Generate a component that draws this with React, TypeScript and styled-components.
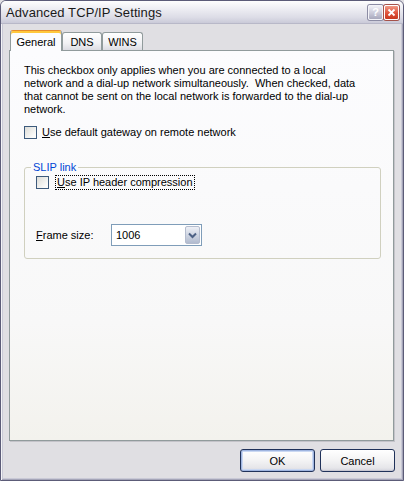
import React from "react";
import styled, { createGlobalStyle } from "styled-components";

const Global = createGlobalStyle`
  html, body { margin: 0; padding: 0; background: #e0dfe3; }
  body { font-family: "Liberation Sans", Arial, sans-serif; font-size: 11px; color: #000; }
`;

const Window = styled.div`
  width: 404px;
  height: 481px;
  box-sizing: border-box;
  background: #e0dfe3;
  border: 1px solid #5c5c78;
  border-radius: 6px 6px 0 0;
  box-shadow: inset 1px 0 0 #f4f4f7, inset -1px 0 0 #a5a5b8, inset 0 -1px 0 #a5a5b8,
    inset 2px 0 0 #c9c9d6, inset -2px 0 0 #c9c9d6, inset 0 -2px 0 #c9c9d6;
  display: flex;
  flex-direction: column;
  overflow: hidden;
`;

const TitleBar = styled.div`
  height: 22px;
  flex: none;
  display: flex;
  align-items: center;
  padding: 0 4px 0 5px;
  background: linear-gradient(#fefefe 0%, #eeeef3 35%, #dcdce6 75%, #cacad8 100%);
  border-bottom: 1px solid #b8b8c8;
`;

const Title = styled.div`
  flex: 1;
  font-size: 13px;
  color: #1a1a1a;
  letter-spacing: 0.1px;
`;

const CaptionButton = styled.div<{ $close?: boolean }>`
  width: 13px;
  height: 13px;
  margin-left: 1px;
  border-radius: 2px;
  border: 1px solid ${({ $close }) => ($close ? "#fff" : "#f4f4f8")};
  box-shadow: 0 0 0 1px ${({ $close }) => ($close ? "#a5524a" : "#8c8ca4")};
  background: ${({ $close }) =>
    $close
      ? "linear-gradient(#f09a86, #e0533b 55%, #c8381f)"
      : "linear-gradient(#f0f0f6, #c6c6d6 60%, #a8a8bc)"};
  display: flex;
  align-items: center;
  justify-content: center;
  color: #fff;
  font-weight: bold;
  font-size: 11px;
  line-height: 1;
`;

const Body = styled.div`
  flex: 1;
  display: flex;
  flex-direction: column;
  padding: 6px 0 0 8px;
`;

const TabStrip = styled.div`
  display: flex;
  align-items: flex-end;
  height: 20px;
  padding-left: 1px;
  position: relative;
  z-index: 1;
`;

const Tab = styled.div<{ $active?: boolean; $w: number }>`
  width: ${({ $w }) => $w}px;
  box-sizing: border-box;
  height: ${({ $active }) => ($active ? 21 : 18)}px;
  margin-bottom: ${({ $active }) => ($active ? -1 : 0)}px;
  border: 1px solid #919b9c;
  border-bottom: none;
  border-radius: 3px 3px 0 0;
  display: flex;
  align-items: center;
  justify-content: center;
  padding-top: ${({ $active }) => ($active ? 1 : 0)}px;
  background: ${({ $active }) =>
    $active ? "#fcfcfe" : "linear-gradient(#ffffff, #f1f1f4 60%, #dcdce3)"};
  ${({ $active }) =>
    $active
      ? "border-top: 1px solid #e68b2c; box-shadow: inset 0 2px 0 #ffc83c;"
      : ""}
`;

const Panel = styled.div`
  width: 385px;
  height: 391px;
  box-sizing: border-box;
  border: 1px solid #919b9c;
  box-shadow: 1px 1px 0 #c4c3c9;
  background: linear-gradient(#fcfcfe, #f8f8f8 70%, #f3f2ed);
  padding: 13px 14px 0 14px;
`;

const Paragraph = styled.p`
  margin: 0;
  line-height: 13px;
`;

const CheckRow = styled.label<{ $mt: number }>`
  display: flex;
  align-items: center;
  margin-top: ${({ $mt }) => $mt}px;
  height: 15px;
`;

const Box = styled.span`
  width: 13px;
  height: 13px;
  box-sizing: border-box;
  border: 1px solid #3d5a7c;
  background: linear-gradient(135deg, #dcdcd7, #fbfbfa 80%);
  flex: none;
`;

const CheckText = styled.span<{ $focus?: boolean }>`
  margin-left: ${({ $focus }) => ($focus ? 6 : 3)}px;
  padding: 0 1px;
  line-height: 13px;
  border: 1px dotted ${({ $focus }) => ($focus ? "#000" : "transparent")};
`;

const Key = styled.span`
  text-decoration: underline;
`;

const Group = styled.fieldset`
  margin: 21px 0 0 0;
  width: 357px;
  height: 98px;
  box-sizing: border-box;
  border: 1px solid #d0d0bf;
  border-radius: 3px;
  padding: 0 0 0 11px;
`;

const Legend = styled.legend`
  color: #0046d5;
  padding: 0 2px;
  margin-left: -5px;
  line-height: 13px;
`;

const FieldRow = styled.div`
  display: flex;
  align-items: center;
  margin-top: 34px;
`;

const FieldLabel = styled.span`
  width: 75px;
`;

const Combo = styled.div`
  width: 91px;
  height: 22px;
  box-sizing: border-box;
  border: 1px solid #7f9db9;
  background: #fff;
  display: flex;
  align-items: center;
  padding: 1px;
`;

const ComboValue = styled.span`
  flex: 1;
  padding-left: 3px;
`;

const ComboButton = styled.span`
  width: 15px;
  height: 18px;
  box-sizing: border-box;
  border: 1px solid #b4bcce;
  border-radius: 2px;
  background: linear-gradient(#eef0f6, #c9d0de 60%, #b2bbcf);
  display: flex;
  align-items: center;
  justify-content: center;
`;

const ButtonRow = styled.div`
  width: 386px;
  display: flex;
  justify-content: flex-end;
  gap: 5px;
  margin-top: 8px;
`;

const Button = styled.div<{ $default?: boolean }>`
  width: 75px;
  height: 23px;
  box-sizing: border-box;
  border: 1px solid #20325a;
  border-radius: 3px;
  background: linear-gradient(#ffffff, #f3f3f4 50%, #e6e6ea 85%, #d4d4dc);
  box-shadow: ${({ $default }) =>
    $default
      ? "inset 0 0 0 1px #9fb5e0, inset 0 0 0 2px #cad8f2"
      : "inset 0 -1px 0 #c8c8d2"};
  display: flex;
  align-items: center;
  justify-content: center;
`;

export default function App() {
  return (
    <>
      <Global />
      <Window>
        <TitleBar>
          <Title>Advanced TCP/IP Settings</Title>
          <CaptionButton>?</CaptionButton>
          <CaptionButton $close>
            <svg width="9" height="9" viewBox="0 0 9 9">
              <path d="M1.5 1.5 L7.5 7.5 M7.5 1.5 L1.5 7.5" stroke="#fff" strokeWidth="1.8" />
            </svg>
          </CaptionButton>
        </TitleBar>
        <Body>
          <TabStrip>
            <Tab $active $w={52}>General</Tab>
            <Tab $w={40}>DNS</Tab>
            <Tab $w={41}>WINS</Tab>
          </TabStrip>
          <Panel>
            <Paragraph>
              This checkbox only applies when you are connected to a local
              <br />
              network and a dial-up network simultaneously.&nbsp; When checked, data
              <br />
              that cannot be sent on the local network is forwarded to the dial-up
              <br />
              network.
            </Paragraph>
            <CheckRow $mt={9}>
              <Box />
              <CheckText>
                <Key>U</Key>se default gateway on remote network
              </CheckText>
            </CheckRow>
            <Group>
              <Legend>SLIP link</Legend>
              <CheckRow $mt={1}>
                <Box />
                <CheckText $focus>
                  <Key>U</Key>se IP header compression
                </CheckText>
              </CheckRow>
              <FieldRow>
                <FieldLabel>
                  <Key>F</Key>rame size:
                </FieldLabel>
                <Combo>
                  <ComboValue>1006</ComboValue>
                  <ComboButton>
                    <svg width="9" height="7" viewBox="0 0 9 7">
                      <path d="M1 1.5 L4.5 5 L8 1.5" stroke="#4d6185" strokeWidth="2" fill="none" />
                    </svg>
                  </ComboButton>
                </Combo>
              </FieldRow>
            </Group>
          </Panel>
          <ButtonRow>
            <Button $default>OK</Button>
            <Button>Cancel</Button>
          </ButtonRow>
        </Body>
      </Window>
    </>
  );
}
